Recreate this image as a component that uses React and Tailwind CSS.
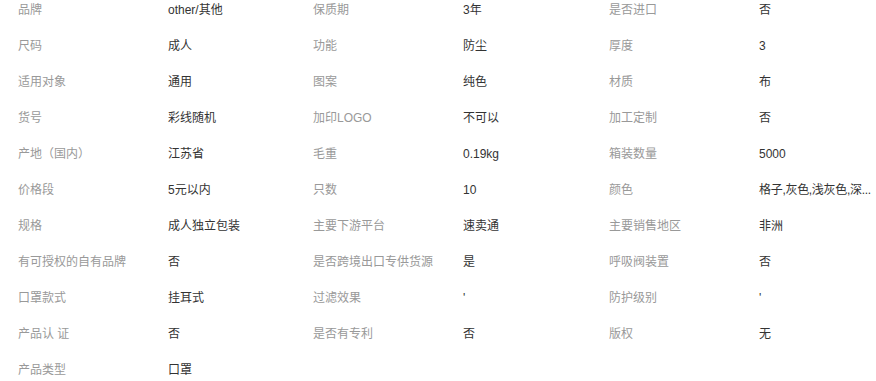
import React from "react";

const rows = [
  ["品牌", "other/其他", "保质期", "3年", "是否进口", "否"],
  ["尺码", "成人", "功能", "防尘", "厚度", "3"],
  ["适用对象", "通用", "图案", "纯色", "材质", "布"],
  ["货号", "彩线随机", "加印LOGO", "不可以", "加工定制", "否"],
  ["产地（国内）", "江苏省", "毛重", "0.19kg", "箱装数量", "5000"],
  ["价格段", "5元以内", "只数", "10", "颜色", "格子,灰色,浅灰色,深..."],
  ["规格", "成人独立包装", "主要下游平台", "速卖通", "主要销售地区", "非洲"],
  ["有可授权的自有品牌", "否", "是否跨境出口专供货源", "是", "呼吸阀装置", "否"],
  ["口罩款式", "挂耳式", "过滤效果", "'", "防护级别", "'"],
  ["产品认 证", "否", "是否有专利", "否", "版权", "无"],
  ["产品类型", "口罩", null, null, null, null],
];

export default function App() {
  return (
    <div
      className="w-[876px] h-[381px] overflow-hidden bg-white text-[12px] leading-[20px]"
      style={{ fontFamily: '"Liberation Sans", "Noto Sans CJK SC", sans-serif' }}
    >
      {rows.map((r, i) => (
        <div
          key={i}
          className="grid grid-cols-[150px_145px_150px_146px_150px_1fr] h-[36px]"
        >
          {r.map((c, j) =>
            c === null ? (
              <div key={j} />
            ) : (
              <div
                key={j}
                className={
                  "pl-[18px] whitespace-nowrap " +
                  (j % 2 === 0 ? "text-[#999999]" : "text-[#333333]") +
                  (i === 5 && j === 5 ? " tracking-[-0.3px]" : "")
                }
              >
                {c}
              </div>
            )
          )}
        </div>
      ))}
    </div>
  );
}
